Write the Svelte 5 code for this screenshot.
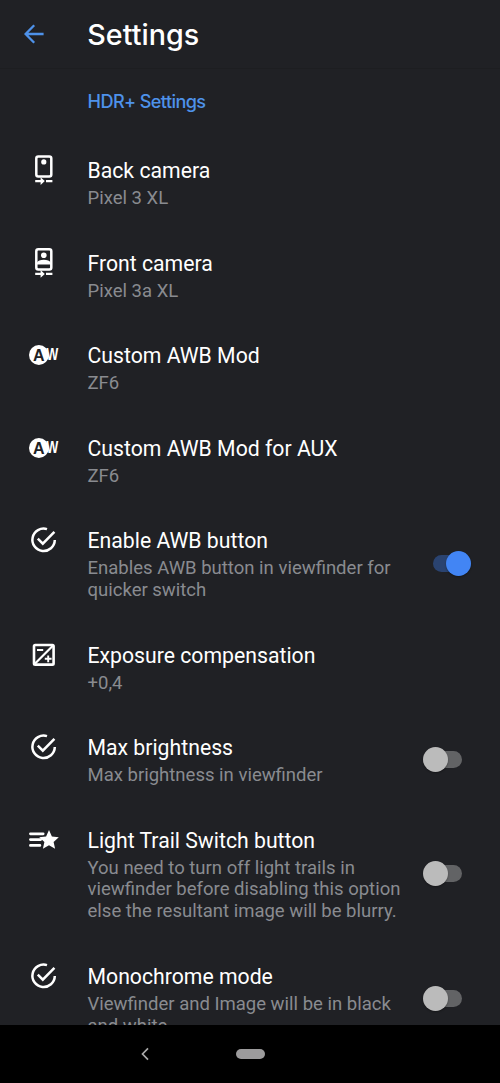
<script>
  const items = [
    { icon: 'rear', title: 'Back camera', lines: ['Pixel 3 XL'] },
    { icon: 'front', title: 'Front camera', lines: ['Pixel 3a XL'] },
    { icon: 'awb', title: 'Custom AWB Mod', lines: ['ZF6'] },
    { icon: 'awb', title: 'Custom AWB Mod for AUX', lines: ['ZF6'] },
    { icon: 'check', title: 'Enable AWB button', lines: ['Enables AWB button in viewfinder for', 'quicker switch'], on: true },
    { icon: 'exposure', title: 'Exposure compensation', lines: ['+0,4'] },
    { icon: 'check', title: 'Max brightness', lines: ['Max brightness in viewfinder'], on: false },
    { icon: 'trail', title: 'Light Trail Switch button', lines: ['You need to turn off light trails in', 'viewfinder before disabling this option', 'else the resultant image will be blurry.'], on: false },
    { icon: 'check', title: 'Monochrome mode', lines: ['Viewfinder and Image will be in black', 'and white'], on: false }
  ];
</script>

<div class="screen">
  <header>
    <svg class="back" width="20" height="20" viewBox="0 0 20 20" fill="none" stroke="#4e92ea" stroke-width="2.3">
      <path d="M19.6 10H1.8M10.2 1.2L1.6 10L10.2 18.8" />
    </svg>
    <h1>Settings</h1>
  </header>
  <main>
    <h2>HDR+ Settings</h2>
    {#each items as item}
      <section class="row">
        <svg class="icon" width="32" height="32" viewBox="-0.6 0 32 32">
          {#if item.icon === 'rear'}
            <rect x="8.7" y="2.4" width="15" height="20.2" rx="2" fill="none" stroke="#fff" stroke-width="2.5" />
            <circle cx="16.2" cy="7.9" r="2.6" fill="#fff" />
            <path d="M7.6 26h5.4v-2.8l4.2 3.9-4.2 3.9v-2.8H7.6zM18.4 26h6.4v2.2h-6.4z" fill="#fff" />
          {:else if item.icon === 'front'}
            <rect x="8.7" y="2.2" width="15" height="20.2" rx="2" fill="none" stroke="#fff" stroke-width="2.5" />
            <circle cx="16.2" cy="8.3" r="2.8" fill="#fff" />
            <path d="M9 17.6v-1.4c1-2.5 4-3.4 7.2-3.4s6.2.9 7.2 3.4v1.4z" fill="#fff" />
            <path d="M7.6 25.8h5.4V23l4.2 3.9-4.2 3.9V28H7.6zM18.4 25.8h6.4V28h-6.4z" fill="#fff" />
          {:else if item.icon === 'awb'}
            <circle cx="11.3" cy="16" r="9.9" fill="#fff" />
            <text x="11.3" y="21.5" class="letter dark">A</text>
            <text x="24.7" y="21.2" class="letter light" textLength="12" lengthAdjust="spacingAndGlyphs">W</text>
          {:else if item.icon === 'check'}
            <path d="M19.4 5.1A11.2 11.2 0 1 0 27.2 16M10.2 14.7l5 5L26.8 7.8" fill="none" stroke="#fff" stroke-width="2.5" />
          {:else if item.icon === 'exposure'}
            <rect x="6.4" y="6" width="19.6" height="19.6" rx="1.2" fill="none" stroke="#fff" stroke-width="2.6" />
            <path d="M7 25L25.5 6.5" stroke="#fff" stroke-width="2.2" />
            <path d="M9.4 11h6.2M17.2 19.8h6.8M20.6 16.4v6.8" stroke="#fff" stroke-width="1.9" />
          {:else}
            <path d="M2.8 9.8h12.8M2.8 15.6h10.3M2.8 21.4h9.5" stroke="#fff" stroke-width="2.7" stroke-linecap="round" />
            <path d="M21.4 6.1l2.9 6.4 6.9.7-5.2 4.7 1.5 6.9-6.1-3.6-6.1 3.6 1.5-6.9-5.2-4.7 6.9-.7z" fill="#fff" />
          {/if}
        </svg>
        <div class="copy">
          <h3>{item.title}</h3>
          {#each item.lines as line}<p>{line}</p>{/each}
        </div>
        {#if item.on !== undefined}
          <div class="switch" class:on={item.on}><i></i></div>
        {/if}
      </section>
    {/each}
  </main>
  <nav>
    <svg class="navback" width="8" height="14" viewBox="0 0 8 14" fill="none" stroke="#aaa" stroke-width="1.7"><path d="M7 1.3L1.5 7L7 12.7" /></svg>
    <span class="pill"></span>
  </nav>
</div>

<style>
  :global(body) { margin: 0; background: #202125; }
  .screen { width: 500px; height: 1083px; display: flex; flex-direction: column; overflow: hidden; background: #202125; font-family: Roboto, sans-serif; }
  header { height: 69px; flex: none; display: flex; align-items: center; border-bottom: 1px solid #1d1e21; box-sizing: border-box; }
  .back { margin-left: 24px; }
  h1 { margin: 1px 0 0 43.3px; font: 500 28.7px/36px Inter, sans-serif; color: #fff; white-space: nowrap; }
  main { flex: 1; min-height: 0; overflow: hidden; }
  h2 { margin: 0; padding: 20px 0 0 87.6px; height: 47.8px; font: 500 18.1px/24px Inter, sans-serif; color: #4e92ea; white-space: nowrap; letter-spacing: -0.6px; }
  .row { display: flex; padding: 20.7px 0 19px; }
  .icon { flex: none; margin: -3px 0 0 27px; overflow: visible; }
  .letter { font: 700 16px "Liberation Sans", sans-serif; text-anchor: middle; }
  .dark { fill: #202125; }
  .light { fill: #fff; }
  .copy { margin-left: 28.5px; width: 330px; flex: none; }
  h3 { margin: 0 0 4px; font-weight: 400; font-size: 21.22px; line-height: 27px; color: #fff; white-space: nowrap; }
  p { margin: 0; font-size: 18.53px; line-height: 21.8px; color: #898b90; white-space: nowrap; }
  .switch { align-self: center; position: relative; width: 29px; height: 17px; border-radius: 9px; background: #626365; margin: -2.6px 0 0 15.3px; }
  .switch i { position: absolute; width: 25px; height: 25px; border-radius: 50%; background: #bbb; left: -10px; top: -4px; box-shadow: 0 1px 2px #0005; }
  .on { background: #2a4370; }
  .on i { background: #4285f4; left: 13.5px; }
  nav { height: 58.5px; flex: none; display: flex; align-items: center; background: #000; }
  .navback { margin-left: 140.5px; }
  .pill { width: 29px; height: 10px; border-radius: 5px; background: #9c9b9c; margin-left: 87px; }
</style>
